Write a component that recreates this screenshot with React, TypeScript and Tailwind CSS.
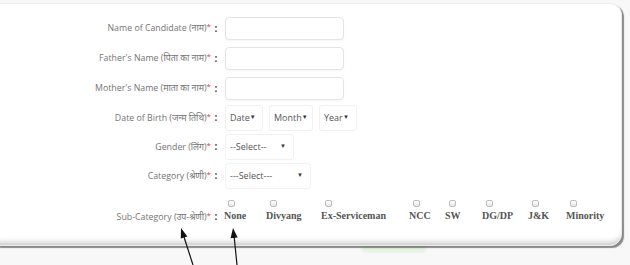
const labelFont = { fontFamily: '"Open Sans", "Noto Sans", "Noto Sans Devanagari", sans-serif' }

type Row = { label: string; kind: 'input' | 'dob' | 'gender' | 'category'; h: string }

const rows: Row[] = [
  { label: 'Name of Candidate (नाम)', kind: 'input', h: 'h-[30px]' },
  { label: "Father's Name (पिता का नाम)", kind: 'input', h: 'h-[30px]' },
  { label: "Mother's Name (माता का नाम)", kind: 'input', h: 'h-[30px]' },
  { label: 'Date of Birth (जन्म तिथि)', kind: 'dob', h: 'h-[29px]' },
  { label: 'Gender (लिंग)', kind: 'gender', h: 'h-[29px]' },
  { label: 'Category (श्रेणी)', kind: 'category', h: 'h-[29px]' },
]

// column widths follow the table cells of the original form
const subCategories = [
  { name: 'None', w: 'w-[42px]' },
  { name: 'Divyang', w: 'w-[55px]' },
  { name: 'Ex-Serviceman', w: 'w-[88px]' },
  { name: 'NCC', w: 'w-[36px]' },
  { name: 'SW', w: 'w-[37px]' },
  { name: 'DG/DP', w: 'w-[46px]' },
  { name: 'J&K', w: 'w-[38px]' },
  { name: 'Minority', w: 'w-[44px]' },
]

const FakeSelect = ({ text, width }: { text: string; width: string }) => (
  <div
    className={`${width} h-[26px] flex items-center justify-between pl-[4px] pr-[7px] border border-[#f1f1f1] rounded-[3px] text-[9px] text-[#555]`}
    style={labelFont}
  >
    <span>{text}</span>
    <span className="text-[6px] text-[#333]">▼</span>
  </div>
)

const Label = ({ text }: { text: string }) => (
  <>
    <div className="w-[222px] text-right text-[8.8px] leading-[12px] text-[#747474]" style={labelFont}>
      {text}
      <span className="text-[#e53935] text-[8px] relative -top-[2px]">*</span>
    </div>
    <div className="w-[10px] text-center text-[10px] font-bold text-[#444]" style={labelFont}>:</div>
  </>
)

const Control = ({ kind }: { kind: Row['kind'] }) => {
  if (kind === 'input')
    return <div className="w-[119px] h-[23px] rounded-[4px] border border-[#e4e4e4] bg-white shadow-[0_1px_2px_rgba(0,0,0,0.04)]" />
  if (kind === 'dob')
    return (
      <div className="flex gap-[6px]">
        <FakeSelect text="Date" width="w-[38px]" />
        <FakeSelect text="Month" width="w-[44px]" />
        <FakeSelect text="Year" width="w-[38px]" />
      </div>
    )
  if (kind === 'gender') return <FakeSelect text="--Select--" width="w-[69px]" />
  return <FakeSelect text="---Select---" width="w-[86px]" />
}

export default function App() {
  return (
    <div className="relative w-[630px] h-[265px] overflow-hidden bg-[#f8f8f8]">
      {/* faint green shape peeking out under the card */}
      <div className="absolute left-[362px] top-[246px] w-[64px] h-[6px] rounded-full bg-[#e3f1de] blur-[1px]" />

      <div className="relative ml-[-12px] mt-[3px] w-[634px] h-[243px] rounded-[12px] bg-white border border-[#ececec] shadow-[inset_0_-7px_6px_-5px_rgba(0,0,0,0.25),2px_2px_1px_rgba(0,0,0,0.45)]">
        <div className="pt-[9px]">
          {rows.map((r) => (
            <div key={r.label} className={`flex items-center ${r.h}`}>
              <Label text={r.label} />
              <div className="ml-[4px]">
                <Control kind={r.kind} />
              </div>
            </div>
          ))}

          <div className="flex items-start mt-[10px]">
            <div className="flex pt-[9px] items-center">
              <Label text="Sub-Category (उप-श्रेणी)" />
            </div>
            <div className="ml-[3px] flex">
              {subCategories.map((s) => (
                <div key={s.name} className={`flex flex-col ${s.w}`}>
                  <div className="ml-[4px] w-[7px] h-[7px] rounded-[2px] border border-[#bdbdbd] bg-gradient-to-b from-white to-[#e6e6e6]" />
                  <div
                    className="mt-[3px] whitespace-nowrap text-[10px] leading-[12px] font-bold text-[#555]"
                    style={{ fontFamily: '"Liberation Serif", serif' }}
                  >
                    {s.name}
                  </div>
                </div>
              ))}
            </div>
          </div>
        </div>
      </div>

      {/* annotation arrows */}
      <svg className="absolute inset-0 pointer-events-none" width="630" height="265" viewBox="0 0 630 265">
        <line x1="193" y1="265" x2="184" y2="237" stroke="#111" strokeWidth="1.2" />
        <polygon points="181,228 187.4,236.4 180.8,238.6" fill="#111" />
        <line x1="237" y1="265" x2="234.2" y2="237" stroke="#111" strokeWidth="1.2" />
        <polygon points="233,228 237.6,237.5 230.6,238.3" fill="#111" />
      </svg>
    </div>
  )
}
